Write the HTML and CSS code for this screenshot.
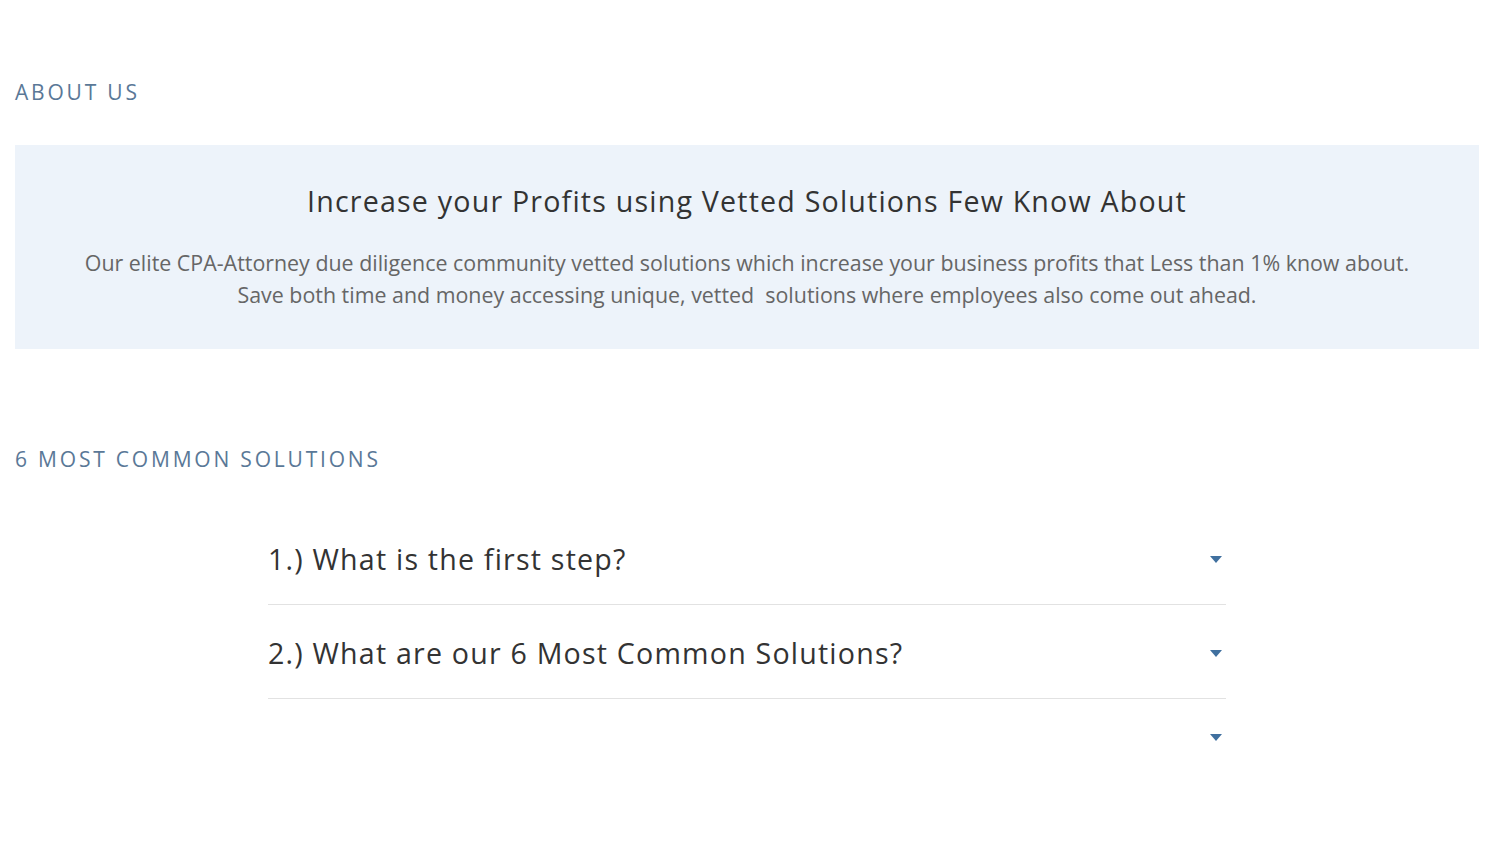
FILE: index.html
```html
<!DOCTYPE html>
<html>
<head>
<meta charset="utf-8">
<link rel="stylesheet" href="styles.css">
</head>
<body>
<div class="page">
  <h2 class="label label-about">ABOUT US</h2>
  <section class="intro">
    <h1 class="intro-title">Increase your Profits using Vetted Solutions Few Know About</h1>
    <p class="intro-text">Our elite CPA-Attorney due diligence community vetted solutions which increase your business profits that Less than 1% know about.<br>Save both time and money accessing unique, vetted&nbsp; solutions where employees also come out ahead.</p>
  </section>
  <h2 class="label label-solutions">6 MOST COMMON SOLUTIONS</h2>
  <div class="accordion">
    <div class="item">
      <div class="item-head">
        <span class="item-title">1.) What is the first step?</span>
        <span class="arrow"></span>
      </div>
    </div>
    <div class="item">
      <div class="item-head">
        <span class="item-title">2.) What are our 6 Most Common Solutions?</span>
        <span class="arrow"></span>
      </div>
    </div>
    <div class="item item-empty">
      <div class="item-head">
        <span class="item-title"></span>
        <span class="arrow"></span>
      </div>
    </div>
  </div>
</div>
</body>
</html>
```
FILE: styles.css
```css
html, body {
  margin: 0;
  padding: 0;
  background: #fff;
}
body {
  font-family: "Open Sans", "Noto Sans", sans-serif;
}
.page {
  padding: 0 21px 0 15px;
}
.label {
  margin: 0;
  font-weight: 400;
  font-size: 21px;
  line-height: 28px;
  letter-spacing: 2.8px;
  color: #5a7897;
}
.label-about {
  padding-top: 78px;
}
.intro {
  margin-top: 39px;
  background: #edf3fa;
  padding: 36px 20px 38px;
  text-align: center;
}
.intro-title {
  margin: 0;
  font-weight: 400;
  font-size: 28.6px;
  line-height: 40px;
  letter-spacing: 1.2px;
  color: #333;
}
.intro-text {
  margin: 26px 0 0;
  font-size: 21.4px;
  line-height: 32px;
  color: #666;
}
.label-solutions {
  margin-top: 96px;
}
.accordion {
  width: 958px;
  margin: 38px auto 0;
}
.item {
  border-bottom: 1px solid #e2e2e2;
  padding: 28px 0 25px;
}
.item-empty {
  border-bottom: none;
}
.item-head {
  display: flex;
  align-items: center;
  justify-content: space-between;
  padding-right: 4px;
}
.item-title {
  font-size: 28.6px;
  line-height: 40px;
  letter-spacing: 1.2px;
  color: #333;
}
.item-empty .item-title {
  line-height: 20px;
  height: 20px;
}
.arrow {
  width: 0;
  height: 0;
  border-left: 6px solid transparent;
  border-right: 6px solid transparent;
  border-top: 7px solid #40709f;
}
```
